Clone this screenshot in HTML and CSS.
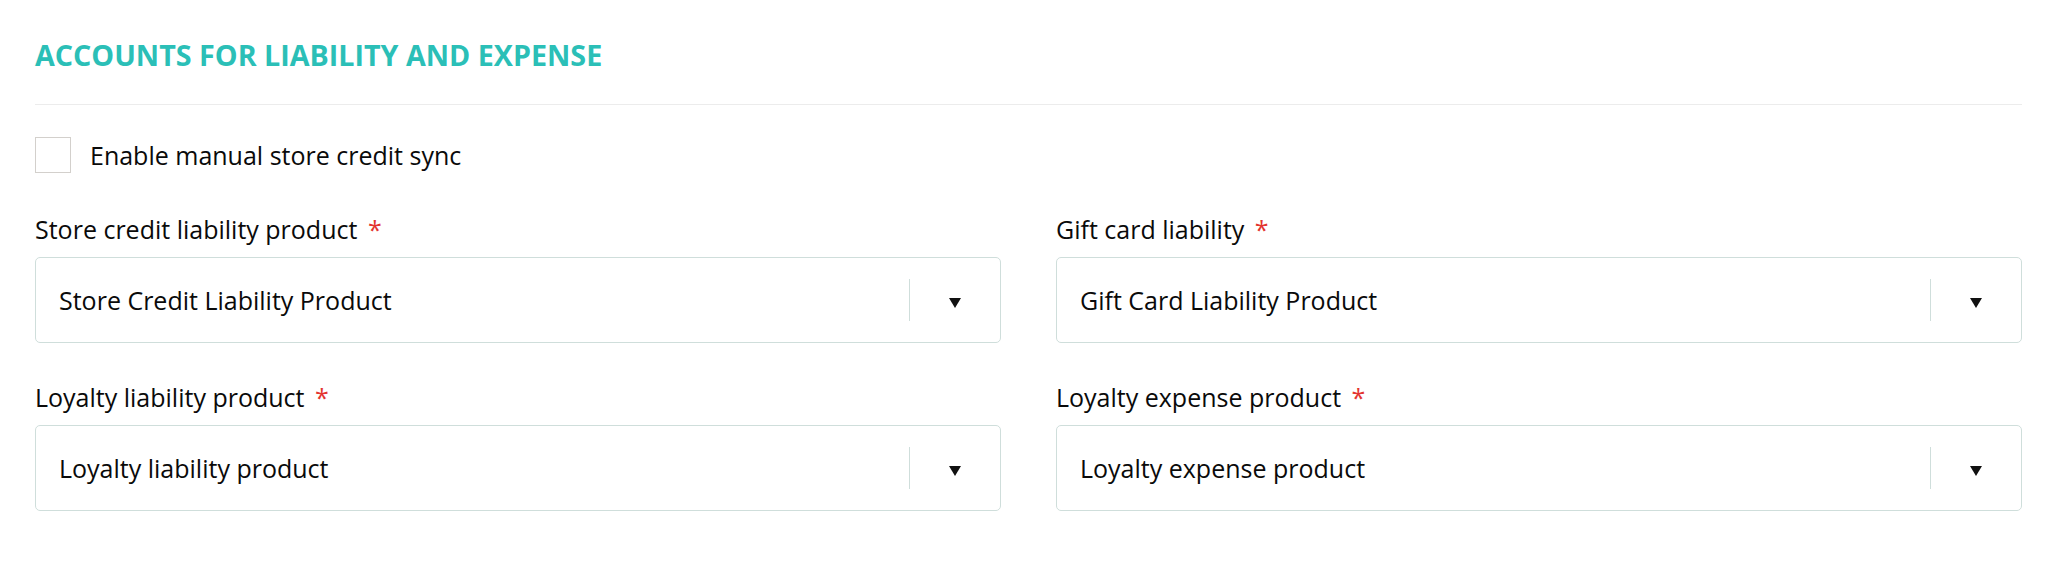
FILE: index.html
```html
<!DOCTYPE html>
<html lang="en">
<head>
<meta charset="utf-8">
<title>Accounts for liability and expense</title>
<link rel="stylesheet" href="styles.css">
</head>
<body>
<section class="panel">
  <h2 class="panel-title">ACCOUNTS FOR LIABILITY AND EXPENSE</h2>
  <label class="check-row">
    <span class="check-box"></span>
    <span class="check-text">Enable manual store credit sync</span>
  </label>
  <div class="fields">
    <div class="field">
      <div class="field-label">Store credit liability product <span class="req">*</span></div>
      <div class="select">
        <div class="select-value">Store Credit Liability Product</div>
        <div class="select-sep"></div>
        <div class="select-indicator"><span class="caret"></span></div>
      </div>
    </div>
    <div class="field">
      <div class="field-label">Gift card liability <span class="req">*</span></div>
      <div class="select">
        <div class="select-value">Gift Card Liability Product</div>
        <div class="select-sep"></div>
        <div class="select-indicator"><span class="caret"></span></div>
      </div>
    </div>
    <div class="field">
      <div class="field-label">Loyalty liability product <span class="req">*</span></div>
      <div class="select">
        <div class="select-value">Loyalty liability product</div>
        <div class="select-sep"></div>
        <div class="select-indicator"><span class="caret"></span></div>
      </div>
    </div>
    <div class="field">
      <div class="field-label">Loyalty expense product <span class="req">*</span></div>
      <div class="select">
        <div class="select-value">Loyalty expense product</div>
        <div class="select-sep"></div>
        <div class="select-indicator"><span class="caret"></span></div>
      </div>
    </div>
  </div>
</section>
</body>
</html>
```

FILE: styles.css
```css
html, body {
  margin: 0;
  padding: 0;
  background: #ffffff;
}
body {
  font-family: "Open Sans", "Liberation Sans", sans-serif;
  color: #0a0a0a;
}
.panel {
  padding: 36px 34px 0 35px;
}
.panel-title {
  margin: 0;
  font-size: 28.7px;
  line-height: 38px;
  font-weight: 700;
  color: #2bbfb7;
  padding-bottom: 30px;
  border-bottom: 1px solid #ececec;
}
.check-row {
  display: flex;
  align-items: center;
  gap: 19px;
  margin-top: 32px;
}
.check-box {
  width: 34px;
  height: 34px;
  border: 1px solid #d3d0cc;
  background: #fff;
}
.check-text {
  font-size: 25px;
  line-height: 30px;
}
.fields {
  display: grid;
  grid-template-columns: 1fr 1fr;
  column-gap: 55px;
  row-gap: 39px;
  margin-top: 41px;
}
.field-label {
  font-size: 25px;
  line-height: 30px;
  margin-bottom: 13px;
}
.req {
  color: #e3342f;
  margin-left: 4px;
}
.select {
  display: flex;
  align-items: center;
  height: 84px;
  border: 1px solid #cfdedb;
  border-radius: 5px;
  background: #fff;
}
.select-value {
  flex: 1;
  padding-left: 23px;
  font-size: 25px;
  line-height: 30px;
}
.select-sep {
  width: 1px;
  height: 42px;
  background: #cfdedb;
}
.select-indicator {
  width: 90px;
  display: flex;
  justify-content: center;
  align-items: center;
  padding-top: 5px;
}
.caret {
  width: 0;
  height: 0;
  border-left: 6px solid transparent;
  border-right: 6px solid transparent;
  border-top: 10px solid #111;
}
```
